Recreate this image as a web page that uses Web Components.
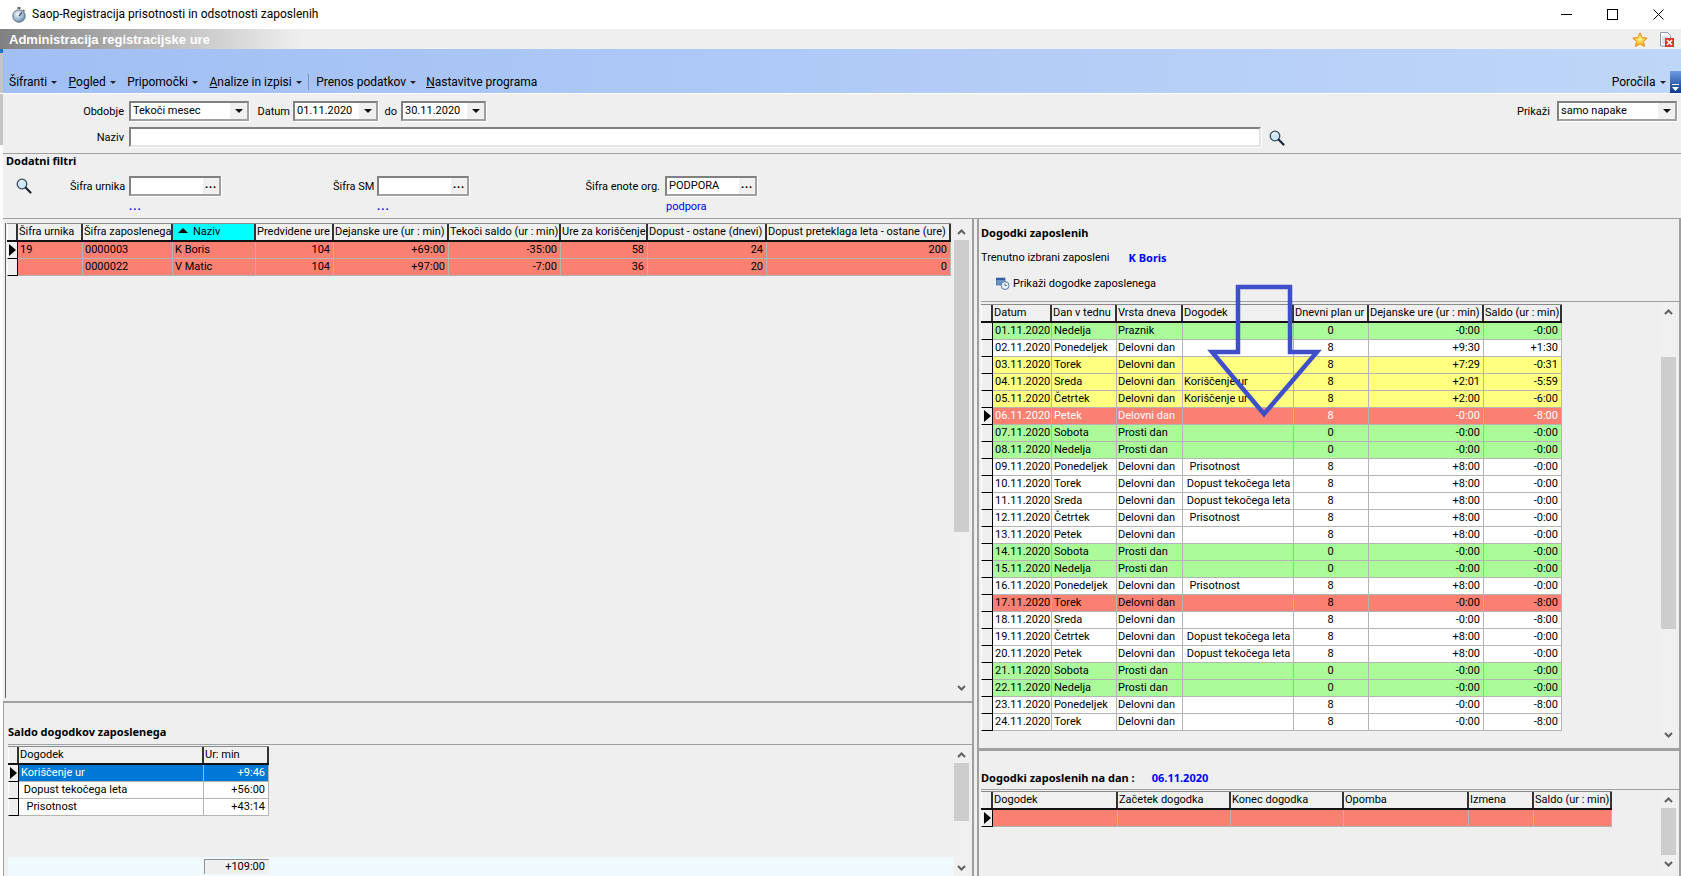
<!doctype html>
<html>
<head>
<meta charset="utf-8">
<title>Saop-Registracija prisotnosti in odsotnosti zaposlenih</title>
<style>
  html, body { margin: 0; height: 100%; overflow: hidden; background: #efefef; }
  body { font: 11px Roboto, "Noto Sans", "Liberation Sans", sans-serif; color: #000; }
</style>
</head>
<body>
<saop-app></saop-app>

<script>
// small helper, every element below is the same pattern
function define(name, css, html, init) {
  customElements.define(name, class extends HTMLElement {
    constructor() {
      super()
      this.attachShadow({ mode: 'open' }).innerHTML = `<style>${css}</style>${typeof html === 'function' ? html(this) : html}`
    }
    connectedCallback() {
      if (init) init(this)
    }
  })
}

define('win-titlebar', `
  :host { display: flex; align-items: center; height: 29px; background: #fff; font: 12px Roboto, sans-serif; padding-left: 12px; }
  svg { flex: none; }
  span { margin: -1px 0 0 6px; flex: 1; }
  .btn { flex: none; width: 11px; height: 11px; display: block; }
  .btns { display: flex; gap: 35px; margin-right: 17px; align-items: center; }
`, `
  <svg width="14" height="16" viewBox="0 0 14 16">
    <defs><radialGradient id="g" cx=".4" cy=".35" r=".8"><stop offset="0" stop-color="#f4f8fc"/><stop offset=".6" stop-color="#8fb0d0"/><stop offset="1" stop-color="#4a6078"/></radialGradient></defs>
    <rect x="5.5" y="0" width="3" height="2" fill="#666"/>
    <path d="M11 3l1.6 1.4" stroke="#666" stroke-width="1.4"/>
    <circle cx="7" cy="9" r="6.2" fill="url(#g)" stroke="#6a7480"/>
    <path d="M7 9L10 5.5" stroke="#39506a" stroke-width="1.2"/>
  </svg>
  <span>Saop-Registracija prisotnosti in odsotnosti zaposlenih</span>
  <div class="btns">
    <svg class="btn" viewBox="0 0 11 11"><path d="M0 5.5h11" stroke="#000"/></svg>
    <svg class="btn" viewBox="0 0 11 11"><rect x=".5" y=".5" width="10" height="10" fill="none" stroke="#000"/></svg>
    <svg class="btn" viewBox="0 0 11 11"><path d="M.5.5l10 10M10.5.5l-10 10" stroke="#000" fill="none"/></svg>
  </div>
`)

define('app-header', `
  :host { display: flex; align-items: center; height: 20px; background: linear-gradient(90deg, #808080, #efefef 300px); }
  b { flex: 1; color: #fff; font: bold 13px "Liberation Sans", sans-serif; padding-left: 6px; }
  svg { flex: none; display: block; }
  .star { margin-right: 12px; }
  .doc { margin-right: 7px; }
`, `
  <b>Administracija registracijske ure</b>
  <svg class="star" width="16" height="15" viewBox="0 0 16 15">
    <defs><radialGradient id="s" cx=".5" cy=".45" r=".6"><stop offset="0" stop-color="#fff59a"/><stop offset=".55" stop-color="#fdc72c"/><stop offset="1" stop-color="#f59a12"/></radialGradient></defs>
    <path d="M8 .8l2.2 4.7 5 .6-3.7 3.4 1 5L8 12l-4.5 2.5 1-5L.8 6.100l5-.6z" fill="url(#s)" stroke="#e88a1a" stroke-width=".9" stroke-linejoin="round"/>
  </svg>
  <svg class="doc" width="14" height="15" viewBox="0 0 14 15">
    <path d="M.5.5h7l3 3v10.500h-10z" fill="#fff" stroke="#8a9ab0"/>
    <path d="M2 5h6M2 7h3M2 9h3M2 11h3" stroke="#b6c4d8"/>
    <rect x="5" y="6" width="9" height="9" fill="#d43a2a"/>
    <path d="M7 8l5 5M12 8l-5 5" stroke="#fff" stroke-width="1.6"/>
  </svg>
`)

define('menu-item', `
  :host { display: inline-flex; align-items: center; gap: 4px; font-size: 12px; white-space: nowrap; }
  i { width: 0; height: 0; border: 3px solid transparent; border-top: 3px solid #222; border-bottom: 0; }
  :host([plain]) i { display: none; }
`, `<span><slot></slot></span><i></i>`)

define('tool-bar', `
  :host { display: flex; align-items: flex-end; height: 44px; background: linear-gradient(90deg, #a1bff5, #bfd6f8); box-sizing: border-box; }
  .left { flex: 1; display: flex; align-items: center; height: 22px; padding-left: 6px; }
  ::slotted(menu-item) { margin-right: 11.500px; }
  ::slotted(.sep) { width: 1px; height: 16px; background: #7f93b8; margin: 0 7px 0 -5px; }
  .right { display: flex; align-items: center; height: 22px; }
  .grip { width: 11px; height: 22px; margin-left: -7px; background: linear-gradient(#6f9be4, #0d3a8a); display: flex; align-items: flex-end; justify-content: center; }
  .grip svg { display: block; margin-bottom: 2px; }
`, `
  <div class="left"><slot></slot></div>
  <div class="right"><slot name="right"></slot>
    <div class="grip"><svg width="7" height="7" viewBox="0 0 7 7"><path d="M0 .5h7" stroke="#fff"/><path d="M0 3h7L3.500 7z" fill="#fff"/></svg></div>
  </div>
`)

define('win-combo', `
  :host { display: inline-flex; box-sizing: border-box; height: 20px; background: #fff; border: 2px solid; border-color: #808080 #a0a0a0 #a0a0a0 #808080; box-shadow: 1px 1px 0 #fff; }
  :host([flat]) { border-color: #808080 #e4e4e4 #e4e4e4 #808080; }
  span { flex: 1; padding-left: 2px; line-height: 15px; white-space: pre; overflow: hidden; }
  .b { flex: none; width: 17px; background: #f0f0f0; display: flex; align-items: center; justify-content: center; border-left: 1px solid #fff; font: bold 11px "Liberation Sans", sans-serif; line-height: 1; }
  :host([flat]) .b { display: none; }
  i { width: 0; height: 0; border: 4px solid transparent; border-top: 4px solid #111; border-bottom: 0; }
  :host([lookup]) .b { width: 16px; }
`, el => `<span>${el.getAttribute('value') || ''}</span><div class="b">${el.hasAttribute('lookup') ? '<b style="letter-spacing:1px;margin-top:-4px">...</b>' : '<i></i>'}</div>`)

define('search-icon', `
  :host { display: inline-block; width: 16px; height: 16px; }
  svg { display: block; }
`, `
  <svg width="16" height="16" viewBox="0 0 16 16">
    <circle cx="6" cy="6" r="4.800" fill="#cfe6f7" stroke="#3a4a5a" stroke-width="1.300"/>
    <path d="M3.500 5a3 3 0 0 1 3-2.200" stroke="#fff" fill="none"/>
    <path d="M9.800 9.800l4.700 4.700" stroke="#1c2630" stroke-width="2.200" stroke-linecap="round"/>
  </svg>
`)

define('filter-panel', `
  :host { display: block; height: 126px; box-sizing: border-box; }
  .top { height: 60px; box-sizing: border-box; border-bottom: 1px solid #a0a0a0; padding-top: 7px; }
  .row { display: flex; align-items: center; height: 20px; margin-bottom: 6px; }
  label { text-align: right; white-space: nowrap; }
  .l { width: 121px; margin-right: 5px; }
  .extra { height: 66px; box-sizing: border-box; border-bottom: 1px solid #a0a0a0; }
  h4 { margin: -1px 0 0 3px; font: bold 11px "Noto Sans", sans-serif; line-height: 15px; height: 23px; }
  .f { display: flex; align-items: center; height: 20px; }
  .hint { display: flex; height: 16px; margin-top: 4px; color: #00f; line-height: 14px; }
  .hint .dots { letter-spacing: 1px; font-weight: bold; }
`, `
  <div class="top">
    <div class="row">
      <label class="l">Obdobje</label><win-combo value="Tekoči mesec" style="width:120px"></win-combo>
      <label style="width:41px;margin-right:3px">Datum</label><win-combo value="01.11.2020" style="width:85px"></win-combo>
      <label style="width:19px;margin-right:4px">do</label><win-combo value="30.11.2020" style="width:85px"></win-combo>
      <label style="margin:0 7px 0 auto">Prikaži</label><win-combo value="samo napake" style="width:120px;margin-right:4px"></win-combo>
    </div>
    <div class="row">
      <label class="l">Naziv</label><win-combo flat style="width:1132px"></win-combo>
      <search-icon style="margin-left:8px;margin-top:2px"></search-icon>
    </div>
  </div>
  <div class="extra">
    <h4>Dodatni filtri</h4>
    <div class="f">
      <search-icon style="margin-left:13px"></search-icon>
      <label style="margin-left:38px;width:54px;margin-right:5px">Šifra urnika</label><win-combo lookup style="width:92px"></win-combo>
      <label style="margin-left:112px;width:40px;margin-right:4px">Šifra SM</label><win-combo lookup style="width:92px"></win-combo>
      <label style="margin-left:115px;width:76px;margin-right:5px">Šifra enote org.</label><win-combo lookup value="PODPORA" style="width:92px"></win-combo>
    </div>
    <div class="hint"><span class="dots" style="margin-left:126px;width:248px">...</span><span class="dots" style="width:289px">...</span><span>podpora</span></div>
  </div>
`)

define('scroll-bar', `
  :host { display: flex; flex-direction: column; flex: none; width: 15px; background: #f0f0f0; }
  .a { flex: none; height: 17px; display: flex; align-items: center; justify-content: center; }
  .t { flex: none; background: #cdcdcd; }
  .r { flex: 1; }
`, el => `
  <div class="a"><svg width="9" height="6" viewBox="0 0 9 6"><path d="M1 5l3.500-3.500L8 5" fill="none" stroke="#606060" stroke-width="2"/></svg></div>
  <div style="height:${el.getAttribute('top') || 0}px"></div>
  <div class="t" style="height:${el.getAttribute('thumb') || 0}px"></div>
  <div class="r"></div>
  <div class="a"><svg width="9" height="6" viewBox="0 0 9 6"><path d="M1 1l3.500 3.500L8 1" fill="none" stroke="#606060" stroke-width="2"/></svg></div>
`)

const ROW_COLORS = { g: '#abfb9b', w: '#fff', y: '#ffff80', r: '#fa8072', s: '#fa8072', b: '#0078d7' }

define('data-grid', `
  :host { display: block; width: max-content; font-size: 11px; }
  .row { display: grid; height: 17px; box-sizing: border-box; }
  .head { height: 19px; border-bottom: 2px solid #111; border-top: 1px solid #8a8a8a; }
  .head .c { background: #f0f0f0; border-right: 2px solid #333; border-bottom: 0; line-height: 15px; padding: 0 0 0 1px; }
  .c { box-sizing: border-box; border-right: 1px solid #b4b4b4; border-bottom: 1px solid #b4b4b4; padding: 0 3px 0 2px; line-height: 15px; white-space: pre; overflow: hidden; }
  .ind { background: #efefef; border-right: 1px solid #000; border-bottom: 1px solid #000; border-left: 1px solid #fff; padding: 0; display: flex; align-items: center; justify-content: center; }
  .head .ind { border-right: 2px solid #333; padding: 0; }
  .ind i { width: 0; height: 0; border: 6px solid transparent; border-left: 7px solid #000; border-right: 0; }
  .right { text-align: right; }
  .center { text-align: center; }
  .tight { padding-left: 1px; }
  .sort { background: #00ffff !important; padding-left: 5px !important; }
  .sort i { display: inline-block; width: 0; height: 0; border: 5px solid transparent; border-bottom: 5px solid #000; border-top: 0; margin-right: 5px; vertical-align: 2px; }
  .s .c:not(.ind), .b .c:not(.ind) { color: #fff; }
`, '')

// fills a data-grid from { cols, rows, current, ind }
function renderGrid(el, data) {
  const { cols, rows, current = 0, ind = 12 } = data
  const tpl = [ind, ...cols.map(c => c.w)].map(w => w + 'px').join(' ')
  const head = cols.map(c => `<div class="c ${c.sort ? 'sort' : ''}">${c.sort ? '<i></i>' : ''}${c.t}</div>`).join('')
  const body = rows.map((r, n) => {
    const cells = r.c.map((v, i) => `<div class="c ${cols[i].a || ''}" style="background:${ROW_COLORS[r.k]}">${v}</div>`).join('')
    return `<div class="row ${r.k}" style="grid-template-columns:${tpl}"><div class="c ind">${n === current ? '<i></i>' : ''}</div>${cells}</div>`
  }).join('')
  const wrap = document.createElement('div')
  wrap.innerHTML = `<div class="row head" style="grid-template-columns:${tpl}"><div class="c ind"></div>${head}</div>${body}`
  el.shadowRoot.append(wrap)
}

define('grid-pane', `
  :host { display: flex; flex-direction: column; box-sizing: border-box; min-height: 0; }
  .body { flex: 1; min-height: 0; display: flex; border-top: 1px solid #a0a0a0; padding-top: 1px; }
  .g { flex: 1; min-width: 0; overflow: hidden; }
  ::slotted(scroll-bar) { margin-right: 3px; }
`, `<slot name="head"></slot><div class="body"><div class="g"><slot></slot></div><slot name="bar"></slot></div>`)

define('pane-title', `
  :host { display: flex; align-items: center; font: bold 11px "Noto Sans", sans-serif; white-space: pre; }
  ::slotted(em) { color: #00f; font-style: normal; }
`, `<slot></slot>`)

define('show-link', `
  :host { display: flex; align-items: center; gap: 3px; height: 16px; }
  svg { display: block; }
`, `
  <svg width="14" height="14" viewBox="0 0 14 14">
    <rect x="0" y="2" width="9" height="7" fill="#6c92c8" stroke="#3c5c90" stroke-width=".6"/>
    <rect x="0" y="2" width="9" height="2" fill="#2f5ea8"/>
    <circle cx="9" cy="9.500" r="4" fill="#e4eef8" stroke="#5a7aa0"/>
    <path d="M9 7.500V9.500h1.800" stroke="#3c5c90" fill="none" stroke-width=".8"/>
  </svg>
  <slot></slot>
`)

define('arrow-overlay', `
  :host { position: absolute; left: 1205px; top: 280px; width: 120px; height: 142px; pointer-events: none; }
  svg { display: block; }
`, `
  <svg width="120" height="142" viewBox="0 0 120 142">
    <polygon points="33,7 85,7 85,72 112,72 59,134 7,72 33,72" fill="none" stroke="#3f4fc8" stroke-width="4.500" stroke-linejoin="miter"/>
  </svg>
`)

const empGrid = {
  ind: 11,
  cols: [
    { t: 'Šifra urnika', w: 65 },
    { t: 'Šifra zaposlenega', w: 90 },
    { t: 'Naziv', w: 83, sort: true },
    { t: 'Predvidene ure', w: 78, a: 'right' },
    { t: 'Dejanske ure (ur : min)', w: 115, a: 'right' },
    { t: 'Tekoči saldo (ur : min)', w: 112, a: 'right' },
    { t: 'Ure za koriščenje', w: 87, a: 'right' },
    { t: 'Dopust - ostane (dnevi)', w: 119, a: 'right' },
    { t: 'Dopust preteklaga leta - ostane (ure)', w: 184, a: 'right' },
  ],
  rows: [
    { k: 'r', c: ['19', '0000003', 'K Boris', '104', '+69:00', '-35:00', '58', '24', '200'] },
    { k: 'r', c: ['', '0000022', 'V Matic', '104', '+97:00', '-7:00', '36', '20', '0'] },
  ],
}

const saldoGrid = {
  ind: 11,
  cols: [{ t: 'Dogodek', w: 185 }, { t: 'Ur: min', w: 65, a: 'right' }],
  rows: [
    { k: 'b', c: ['Koriščenje ur', '+9:46'] },
    { k: 'w', c: ['\u00a0Dopust tekočega leta', '+56:00'] },
    { k: 'w', c: ['\u00a0\u00a0Prisotnost', '+43:14'] },
  ],
}

const DOP = '\u00a0Dopust tekočega leta', PRI = '\u00a0\u00a0Prisotnost', KOR = 'Koriščenje ur'
const day = (k, d, name, type, ev, plan, act, sal) => ({ k, c: [d + '.11.2020', name, type, ev, plan, act, sal] })
const DD = 'Delovni dan', PD = 'Prosti dan'
const eventsGrid = {
  current: 5,
  cols: [
    { t: 'Datum', w: 59 },
    { t: 'Dan v tednu', w: 65 },
    { t: 'Vrsta dneva', w: 66, a: 'tight' },
    { t: 'Dogodek', w: 111, a: 'tight' },
    { t: 'Dnevni plan ur', w: 75, a: 'center' },
    { t: 'Dejanske ure (ur : min)', w: 115, a: 'right' },
    { t: 'Saldo (ur : min)', w: 78, a: 'right' },
  ],
  rows: [
    day('g', '01', 'Nedelja', 'Praznik', '', '0', '-0:00', '-0:00'),
    day('w', '02', 'Ponedeljek', DD, '', '8', '+9:30', '+1:30'),
    day('y', '03', 'Torek', DD, '', '8', '+7:29', '-0:31'),
    day('y', '04', 'Sreda', DD, KOR, '8', '+2:01', '-5:59'),
    day('y', '05', 'Četrtek', DD, KOR, '8', '+2:00', '-6:00'),
    day('s', '06', 'Petek', DD, '', '8', '-0:00', '-8:00'),
    day('g', '07', 'Sobota', PD, '', '0', '-0:00', '-0:00'),
    day('g', '08', 'Nedelja', PD, '', '0', '-0:00', '-0:00'),
    day('w', '09', 'Ponedeljek', DD, PRI, '8', '+8:00', '-0:00'),
    day('w', '10', 'Torek', DD, DOP, '8', '+8:00', '-0:00'),
    day('w', '11', 'Sreda', DD, DOP, '8', '+8:00', '-0:00'),
    day('w', '12', 'Četrtek', DD, PRI, '8', '+8:00', '-0:00'),
    day('w', '13', 'Petek', DD, '', '8', '+8:00', '-0:00'),
    day('g', '14', 'Sobota', PD, '', '0', '-0:00', '-0:00'),
    day('g', '15', 'Nedelja', PD, '', '0', '-0:00', '-0:00'),
    day('w', '16', 'Ponedeljek', DD, PRI, '8', '+8:00', '-0:00'),
    day('r', '17', 'Torek', DD, '', '8', '-0:00', '-8:00'),
    day('w', '18', 'Sreda', DD, '', '8', '-0:00', '-8:00'),
    day('w', '19', 'Četrtek', DD, DOP, '8', '+8:00', '-0:00'),
    day('w', '20', 'Petek', DD, DOP, '8', '+8:00', '-0:00'),
    day('g', '21', 'Sobota', PD, '', '0', '-0:00', '-0:00'),
    day('g', '22', 'Nedelja', PD, '', '0', '-0:00', '-0:00'),
    day('w', '23', 'Ponedeljek', DD, '', '8', '-0:00', '-8:00'),
    day('w', '24', 'Torek', DD, '', '8', '-0:00', '-8:00'),
  ],
}

const dayGrid = {
  cols: [
    { t: 'Dogodek', w: 125 }, { t: 'Začetek dogodka', w: 113 }, { t: 'Konec dogodka', w: 113 },
    { t: 'Opomba', w: 125 }, { t: 'Izmena', w: 65 }, { t: 'Saldo (ur : min)', w: 78 },
  ],
  rows: [{ k: 'r', c: ['', '', '', '', '', ''] }],
}

define('saop-app', `
  :host { display: grid; grid-template-rows: 29px 20px 44px 1px 125px 1fr; height: 876px; overflow: hidden; position: relative;
    background: linear-gradient(#fff 29px, #1f6fc4 29px, #1f6fc4 53px, #c4c4c4 53px, #c4c4c4 145px, #fdfdfd 145px) 0 0 / 3px 100% no-repeat, #efefef; }
  .strip { padding-left: 3px; min-width: 0; }
  .main { display: grid; grid-template-columns: 971px 1fr; min-height: 0; padding-left: 3px; height: 657px; }
  .col { display: grid; min-height: 0; height: 657px; }
  .lcol { grid-template-rows: 479px 1fr; border-right: 2px solid #a0a0a0; box-sizing: border-box; width: 971px; }
  .rcol { grid-template-rows: 526px 1fr; margin-left: 3px; border-left: 2px solid #a0a0a0; border-right: 2px solid #a0a0a0; }
  .lg { padding: 4px 0 0 0; min-height: 0; }
  .lg .in { display: flex; height: 100%; }
  .lg .gr { flex: 1; min-width: 0; margin-left: 2px; border-left: 1px solid #606060; padding-left: 1px; }
  .lg scroll-bar { margin: 0 3px 2px 0; }
  .ls { border-top: 2px solid #a0a0a0; border-left: 1px solid #a0a0a0; padding-left: 4px; margin-top: 3px; min-height: 0; }
  .rt { padding-left: 2px; min-height: 0; }
  .rb { border-top: 3px solid #a0a0a0; margin-top: 3px; padding-left: 2px; min-height: 0; }
  grid-pane { height: 100%; }
  #events { margin-top: 1px; }
  .rhead { height: 82px; box-sizing: border-box; padding: 6px 0 0 0; }
  .rhead pane-title { height: 15px; }
  .cur { display: flex; margin-top: 9px; height: 16px; align-items: center; }
  .cur b { color: #00f; margin-left: 19px; font: bold 11px "Noto Sans", sans-serif; }
  show-link { margin: 10px 0 0 15px; }
  .shead { height: 41px; box-sizing: border-box; padding: 21px 0 0 0; }
  .dhead { height: 38px; box-sizing: border-box; padding: 19px 0 0 0; }
  .foot { height: 20px; background: #eff9fe; padding: 2px 0 0 198px; margin: 41px 0 0 -2px; width: 948px; box-sizing: border-box; }
  .foot div { width: 65px; height: 15px; box-sizing: border-box; background: #efefef; border-top: 1px solid #909090; border-left: 1px solid #909090; text-align: right; padding-right: 4px; line-height: 14px; }
`, `
  <win-titlebar></win-titlebar>
  <app-header class="strip"></app-header>
  <div class="strip"><tool-bar>
    <menu-item>Šifranti</menu-item>
    <menu-item><u>P</u>ogled</menu-item>
    <menu-item>Pripomočki</menu-item>
    <menu-item><u>A</u>nalize in izpisi</menu-item>
    <div class="sep"></div>
    <menu-item style="margin-right:10px">Prenos podatkov</menu-item>
    <menu-item plain><u>N</u>astavitve programa</menu-item>
    <menu-item slot="right">Poročila</menu-item>
  </tool-bar></div>
  <div class="strip" style="background:#fff"></div>
  <filter-panel class="strip"></filter-panel>
  <div class="main">
    <div class="col lcol">
      <div class="lg">
        <div class="in">
          <div class="gr"><data-grid id="emp"></data-grid></div>
          <scroll-bar top="0" thumb="292"></scroll-bar>
        </div>
      </div>
      <div class="ls">
        <grid-pane>
          <div slot="head" class="shead"><pane-title>Saldo dogodkov zaposlenega</pane-title></div>
          <div>
            <data-grid id="saldo"></data-grid>
            <div class="foot"><div>+109:00</div></div>
          </div>
          <scroll-bar slot="bar" top="0" thumb="58"></scroll-bar>
        </grid-pane>
      </div>
    </div>
    <div class="col rcol">
      <div class="rt">
        <grid-pane>
          <div slot="head" class="rhead">
            <pane-title>Dogodki zaposlenih</pane-title>
            <div class="cur"><span>Trenutno izbrani zaposleni</span><b>K Boris</b></div>
            <show-link>Prikaži dogodke zaposlenega</show-link>
          </div>
          <data-grid id="events"></data-grid>
          <scroll-bar slot="bar" top="37" thumb="272" style="margin-bottom:2px"></scroll-bar>
        </grid-pane>
      </div>
      <div class="rb">
        <grid-pane>
          <div slot="head" class="dhead"><pane-title>Dogodki zaposlenih na dan :      <em>06.11.2020</em></pane-title></div>
          <data-grid id="day"></data-grid>
          <scroll-bar slot="bar" top="0" thumb="47" style="margin-bottom:4px"></scroll-bar>
        </grid-pane>
      </div>
    </div>
  </div>
  <arrow-overlay></arrow-overlay>
`, el => {
  const root = el.shadowRoot
  renderGrid(root.getElementById('emp'), empGrid)
  renderGrid(root.getElementById('saldo'), saldoGrid)
  renderGrid(root.getElementById('events'), eventsGrid)
  renderGrid(root.getElementById('day'), dayGrid)
})
</script>
</body>
</html>
